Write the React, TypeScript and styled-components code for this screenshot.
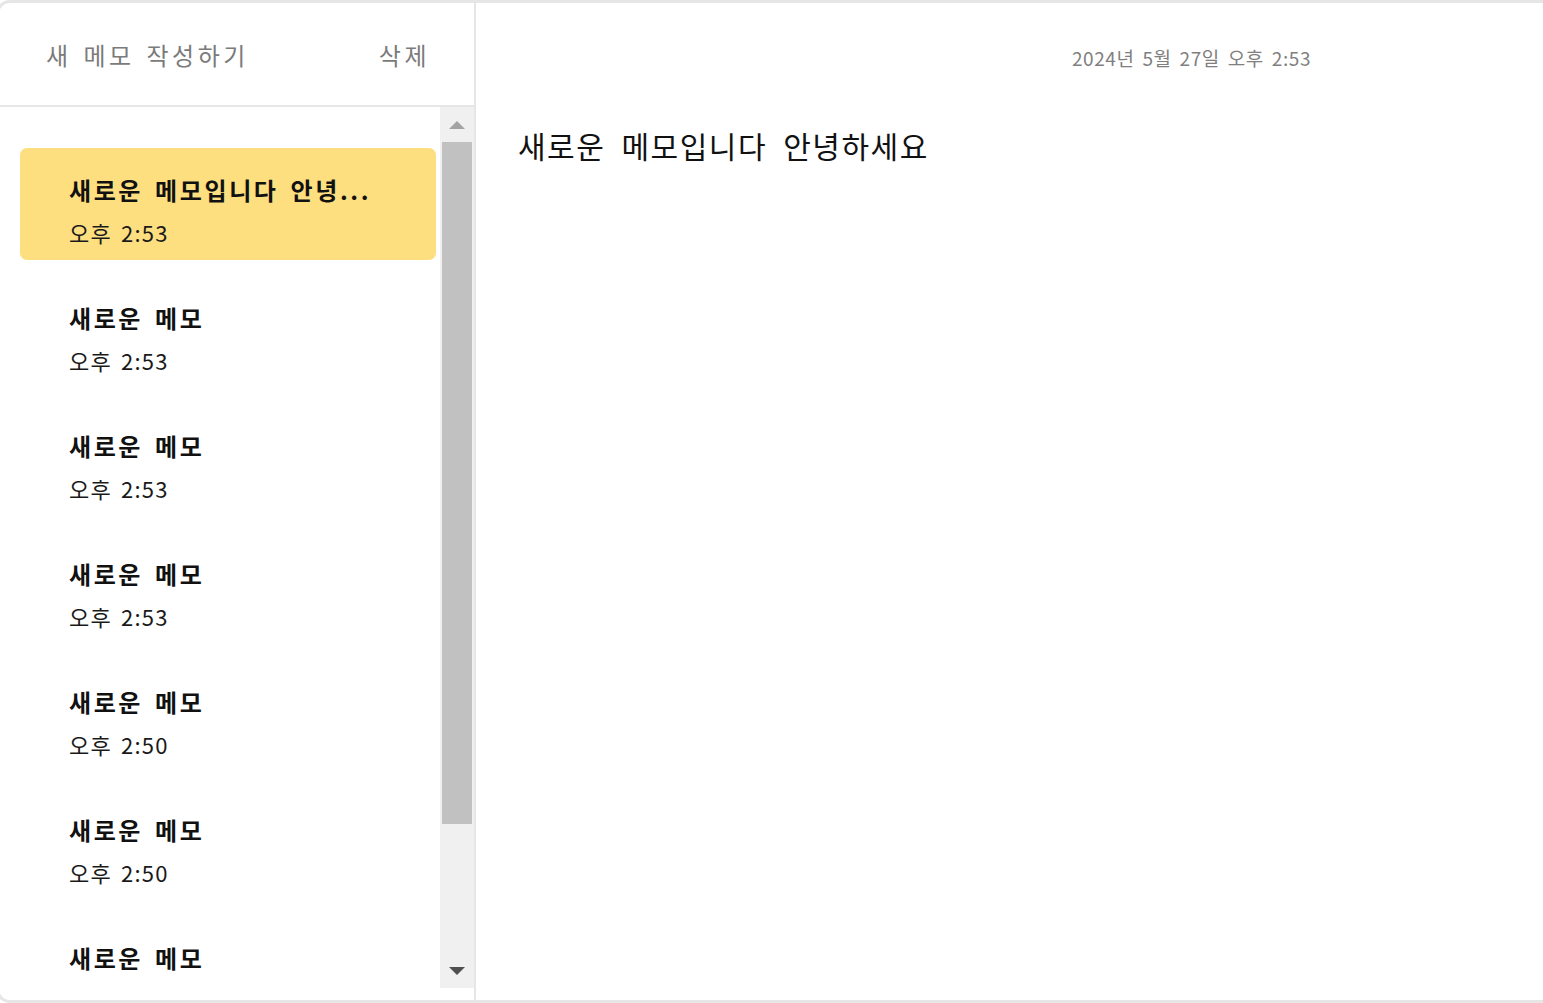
import React from 'react'
import styled, { createGlobalStyle } from 'styled-components'

type Memo = {
  id: number
  title: string
  time: string
}

const memos: Memo[] = [
  { id: 1, title: '새로운 메모입니다 안녕...', time: '오후 2:53' },
  { id: 2, title: '새로운 메모', time: '오후 2:53' },
  { id: 3, title: '새로운 메모', time: '오후 2:53' },
  { id: 4, title: '새로운 메모', time: '오후 2:53' },
  { id: 5, title: '새로운 메모', time: '오후 2:50' },
  { id: 6, title: '새로운 메모', time: '오후 2:50' },
  { id: 7, title: '새로운 메모', time: '오후 2:50' },
  { id: 8, title: '새로운 메모', time: '오후 2:50' },
]

const GlobalStyle = createGlobalStyle`
  html, body {
    margin: 0;
    padding: 0;
    overflow: hidden;
    background: #ffffff;
    font-family: "Noto Sans CJK KR", "Noto Sans", sans-serif;
  }

  * {
    box-sizing: border-box;
  }
`

// the list thumb covers the visible share of the list (881 of ~1049px)
const THUMB_HEIGHT = 682

export default function App() {
  const selectedId = 1

  return (
    <>
      <GlobalStyle />
      <Frame>
        <Sidebar>
          <Header>
            <HeaderButton type="button">새 메모 작성하기</HeaderButton>
            <HeaderButton type="button">삭제</HeaderButton>
          </Header>

          <ListArea>
            <MemoList>
              {memos.map((memo) => (
                <MemoCard key={memo.id} $selected={memo.id === selectedId}>
                  <MemoTitle>{memo.title}</MemoTitle>
                  <MemoTime>{memo.time}</MemoTime>
                </MemoCard>
              ))}
            </MemoList>

            <ScrollBar>
              <ArrowButton type="button" $tone="#a3a3a3" aria-label="위로">
                <svg width="16" height="8" viewBox="0 0 16 8">
                  <polygon points="0,8 8,0 16,8" fill="currentColor" />
                </svg>
              </ArrowButton>
              <ThumbRail>
                <Thumb style={{ height: THUMB_HEIGHT }} />
              </ThumbRail>
              <ArrowButton type="button" $tone="#505050" aria-label="아래로">
                <svg width="16" height="8" viewBox="0 0 16 8">
                  <polygon points="0,0 16,0 8,8" fill="currentColor" />
                </svg>
              </ArrowButton>
            </ScrollBar>
          </ListArea>
        </Sidebar>

        <Main>
          <DateLine>2024년 5월 27일 오후 2:53</DateLine>
          <Content>새로운 메모입니다 안녕하세요</Content>
        </Main>
      </Frame>
    </>
  )
}

const Frame = styled.div`
  display: flex;
  width: 1912px;
  height: 1003px;
  margin-left: -4px;
  border: 3px solid #e6e6e6;
  border-radius: 14px;
  overflow: hidden;
  background: #ffffff;
`

const Sidebar = styled.aside`
  display: flex;
  flex-direction: column;
  flex: 0 0 477px;
  border-right: 2px solid #e6e6e6;
  padding-bottom: 12px;
  min-height: 0;
`

const Header = styled.div`
  display: flex;
  align-items: center;
  justify-content: space-between;
  height: 104px;
  padding: 0 44px 0 47px;
  border-bottom: 2px solid #e6e6e6;
  flex-shrink: 0;
`

const HeaderButton = styled.button`
  border: none;
  background: none;
  padding: 0;
  font-family: "Noto Sans CJK KR", sans-serif;
  font-size: 24px;
  letter-spacing: 3.5px;
  word-spacing: 3px;
  color: #7b7b7b;
  cursor: pointer;
`

const ListArea = styled.div`
  display: flex;
  flex: 1;
  min-height: 0;
`

const MemoList = styled.div`
  display: flex;
  flex-direction: column;
  gap: 16px;
  flex: 1;
  min-width: 0;
  overflow: hidden;
  padding: 41px 4px 0 21px;
`

const ScrollBar = styled.div`
  display: flex;
  flex-direction: column;
  flex: 0 0 34px;
  background: #f0f0f0;
`

const ArrowButton = styled.button<{ $tone: string }>`
  display: flex;
  align-items: center;
  justify-content: center;
  height: 35px;
  flex-shrink: 0;
  padding: 0;
  border: none;
  background: none;
  color: ${({ $tone }) => $tone};

  svg {
    display: block;
  }
`

const ThumbRail = styled.div`
  flex: 1;
  padding: 0 2px;
`

const Thumb = styled.div`
  width: 100%;
  background: #c1c1c1;
`

const MemoCard = styled.div<{ $selected?: boolean }>`
  display: flex;
  flex-direction: column;
  flex-shrink: 0;
  height: 112px;
  padding: 26px 16px 0 49px;
  border-radius: 7px;
  background: ${({ $selected }) => ($selected ? '#fedf80' : 'transparent')};
`

const MemoTitle = styled.div`
  font-size: 24px;
  line-height: 32px;
  font-weight: 700;
  letter-spacing: 2.6px;
  word-spacing: 4px;
  color: #111111;
  white-space: nowrap;
`

const MemoTime = styled.div`
  margin-top: 10px;
  font-size: 22px;
  line-height: 32px;
  letter-spacing: 1.2px;
  word-spacing: 3px;
  color: #1a1a1a;
`

const Main = styled.main`
  display: flex;
  flex-direction: column;
  flex: 1;
  padding: 41px 40px 0 42px;
`

const DateLine = styled.div`
  text-align: center;
  font-size: 19px;
  line-height: 28px;
  letter-spacing: 0.6px;
  word-spacing: 3px;
  color: #7f7f7f;
`

const Content = styled.div`
  margin-top: 53px;
  font-size: 30px;
  line-height: 40px;
  letter-spacing: 1.5px;
  word-spacing: 8px;
  color: #111111;
`
